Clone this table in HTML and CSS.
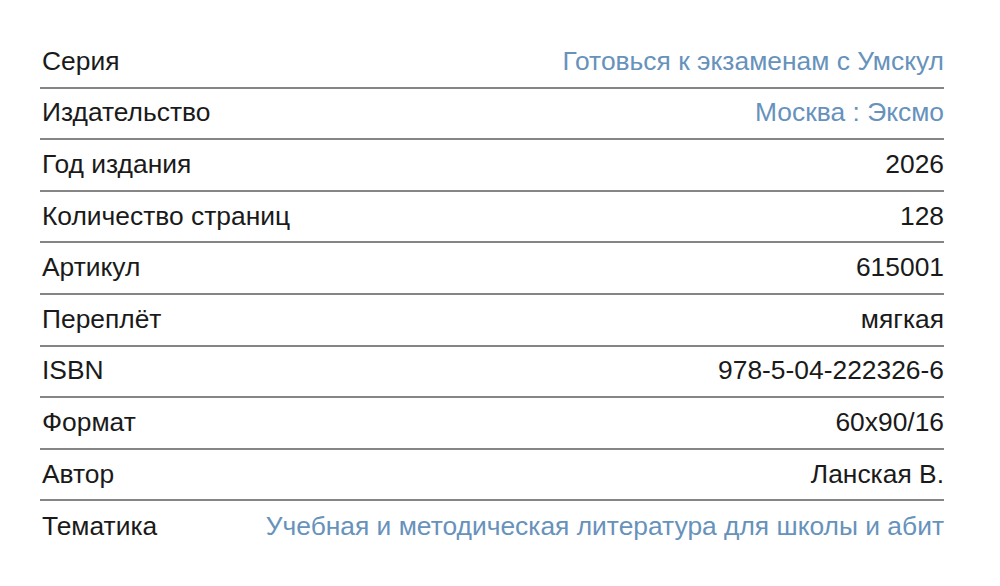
FILE: index.html
```html
<!DOCTYPE html>
<html lang="ru">
<head>
<meta charset="utf-8">
<link rel="stylesheet" href="styles.css">
</head>
<body>
<div class="specs">
  <div class="row"><div class="label">Серия</div><div class="value link">Готовься к экзаменам с Умскул</div></div>
  <div class="row"><div class="label">Издательство</div><div class="value link">Москва : Эксмо</div></div>
  <div class="row"><div class="label">Год издания</div><div class="value">2026</div></div>
  <div class="row"><div class="label">Количество страниц</div><div class="value">128</div></div>
  <div class="row"><div class="label">Артикул</div><div class="value">615001</div></div>
  <div class="row"><div class="label">Переплёт</div><div class="value">мягкая</div></div>
  <div class="row"><div class="label">ISBN</div><div class="value">978-5-04-222326-6</div></div>
  <div class="row"><div class="label">Формат</div><div class="value">60x90/16</div></div>
  <div class="row"><div class="label">Автор</div><div class="value">Ланская В.</div></div>
  <div class="row last"><div class="label">Тематика</div><div class="value link">Учебная и методическая литература для школы и абит</div></div>
</div>
</body>
</html>
```
FILE: styles.css
```css
html, body {
  margin: 0;
  padding: 0;
  background: #ffffff;
}
body {
  font-family: "Liberation Sans", Arial, sans-serif;
  font-size: 26.4px;
  color: #1a1a1a;
}
.specs {
  margin: 37px 0 0 40px;
  width: 904px;
}
.row {
  display: flex;
  align-items: center;
  box-sizing: border-box;
  height: 51.6px;
  border-bottom: 2px solid #858585;
  padding: 0 0 1px 2px;
}
.row.last {
  border-bottom: none;
}
.label {
  flex: 0 0 220px;
  white-space: nowrap;
}
.value {
  flex: 1 1 auto;
  min-width: 0;
  text-align: right;
  white-space: nowrap;
}
.link {
  color: #6792bb;
}
```
